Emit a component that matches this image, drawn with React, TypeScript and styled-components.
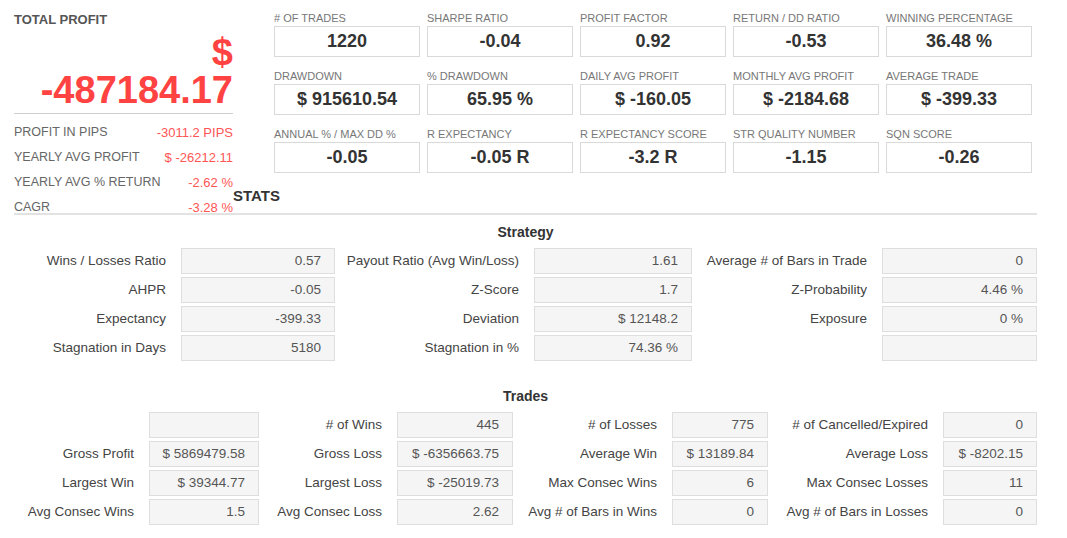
import React from "react";
import styled, { createGlobalStyle } from "styled-components";

const topStats: [string, string][] = [
  ["# OF TRADES", "1220"],
  ["SHARPE RATIO", "-0.04"],
  ["PROFIT FACTOR", "0.92"],
  ["RETURN / DD RATIO", "-0.53"],
  ["WINNING PERCENTAGE", "36.48 %"],
  ["DRAWDOWN", "$ 915610.54"],
  ["% DRAWDOWN", "65.95 %"],
  ["DAILY AVG PROFIT", "$ -160.05"],
  ["MONTHLY AVG PROFIT", "$ -2184.68"],
  ["AVERAGE TRADE", "$ -399.33"],
  ["ANNUAL % / MAX DD %", "-0.05"],
  ["R EXPECTANCY", "-0.05 R"],
  ["R EXPECTANCY SCORE", "-3.2 R"],
  ["STR QUALITY NUMBER", "-1.15"],
  ["SQN SCORE", "-0.26"],
];

const summary: [string, string][] = [
  ["PROFIT IN PIPS", "-3011.2 PIPS"],
  ["YEARLY AVG PROFIT", "$ -26212.11"],
  ["YEARLY AVG % RETURN", "-2.62 %"],
  ["CAGR", "-3.28 %"],
];

const strategy: [string, string][][] = [
  [["Wins / Losses Ratio", "0.57"], ["Payout Ratio (Avg Win/Loss)", "1.61"], ["Average # of Bars in Trade", "0"]],
  [["AHPR", "-0.05"], ["Z-Score", "1.7"], ["Z-Probability", "4.46 %"]],
  [["Expectancy", "-399.33"], ["Deviation", "$ 12148.2"], ["Exposure", "0 %"]],
  [["Stagnation in Days", "5180"], ["Stagnation in %", "74.36 %"], ["", ""]],
];

const trades: [string, string][][] = [
  [["", ""], ["# of Wins", "445"], ["# of Losses", "775"], ["# of Cancelled/Expired", "0"]],
  [["Gross Profit", "$ 5869479.58"], ["Gross Loss", "$ -6356663.75"], ["Average Win", "$ 13189.84"], ["Average Loss", "$ -8202.15"]],
  [["Largest Win", "$ 39344.77"], ["Largest Loss", "$ -25019.73"], ["Max Consec Wins", "6"], ["Max Consec Losses", "11"]],
  [["Avg Consec Wins", "1.5"], ["Avg Consec Loss", "2.62"], ["Avg # of Bars in Wins", "0"], ["Avg # of Bars in Losses", "0"]],
];

const App = () => {
  return (
    <>
      <GlobalStyle />
      <Page>
        <TopRow>
          <LeftPanel>
            <PanelTitle>TOTAL PROFIT</PanelTitle>
            <BigProfit>
              <div>$</div>
              <div>-487184.17</div>
            </BigProfit>
            <SummaryList>
              {summary.map(([label, value]) => (
                <SummaryRow key={label}>
                  <span>{label}</span>
                  <SummaryValue>{value}</SummaryValue>
                </SummaryRow>
              ))}
            </SummaryList>
          </LeftPanel>
          <RightCol>
            <KpiGrid>
              {topStats.map(([label, value]) => (
                <Kpi key={label}>
                  <KpiLabel>{label}</KpiLabel>
                  <KpiBox>{value}</KpiBox>
                </Kpi>
              ))}
            </KpiGrid>
            <StatsHeading>STATS</StatsHeading>
          </RightCol>
        </TopRow>

        <SectionTitle $top={9}>Strategy</SectionTitle>
        <StatTable $cols='167px 154px 199px 158px 190px 155px'>
          {strategy.flat().map(([label, value], i) => (
            <React.Fragment key={i}>
              <CellLabel>{label}</CellLabel>
              <CellBox>{value}</CellBox>
            </React.Fragment>
          ))}
        </StatTable>

        <SectionTitle $top={27}>Trades</SectionTitle>
        <StatTable $cols='135px 110px 138px 116px 159px 96px 175px 94px'>
          {trades.flat().map(([label, value], i) => (
            <React.Fragment key={i}>
              <CellLabel>{label}</CellLabel>
              <CellBox>{value}</CellBox>
            </React.Fragment>
          ))}
        </StatTable>
      </Page>
    </>
  );
};

export default App;

const GlobalStyle = createGlobalStyle`
  body {
    margin: 0;
    background: #fff;
    font-family: "Liberation Sans", Arial, sans-serif;
  }
`;

const Page = styled.div`
  width: 1023px;
  padding: 11px 0 0 14px;
`;

const TopRow = styled.div`
  display: flex;
  border-bottom: 2px solid #e2e2e2;
`;

const LeftPanel = styled.div`
  width: 219px;
  flex-shrink: 0;
  margin-bottom: -7px;
`;

const PanelTitle = styled.div`
  margin-top: 1px;
  font-size: 13px;
  line-height: 16px;
  font-weight: bold;
  color: #555;
`;

const BigProfit = styled.div`
  margin-top: 5px;
  padding-bottom: 4px;
  border-bottom: 1px solid #cfcfcf;
  text-align: right;
  font-size: 38px;
  line-height: 38px;
  font-weight: bold;
  color: #ff4343;
`;

const SummaryList = styled.div`
  padding-top: 6px;
`;

const SummaryRow = styled.div`
  display: flex;
  justify-content: space-between;
  height: 25px;
  line-height: 25px;
  font-size: 12.5px;
  color: #666;
  white-space: nowrap;
`;

const SummaryValue = styled.span`
  color: #ff5555;
  font-size: 13px;
`;

const RightCol = styled.div`
  flex: 1;
  display: flex;
  flex-direction: column;
`;

const KpiGrid = styled.div`
  margin-left: 41px;
  display: grid;
  grid-template-columns: repeat(5, 146px);
  column-gap: 7px;
  row-gap: 12px;
`;

const Kpi = styled.div`
  display: flex;
  flex-direction: column;
  gap: 1px;
`;

const KpiLabel = styled.div`
  font-size: 11px;
  line-height: 14px;
  color: #777;
  white-space: nowrap;
`;

const KpiBox = styled.div`
  box-sizing: border-box;
  height: 31px;
  line-height: 29px;
  border: 1px solid #d9d9d9;
  background: #fff;
  text-align: center;
  font-size: 18px;
  font-weight: bold;
  color: #333;
`;

const StatsHeading = styled.div`
  margin-top: auto;
  margin-bottom: 8px;
  font-size: 15px;
  line-height: 18px;
  font-weight: bold;
  color: #333;
`;

const SectionTitle = styled.div<{ $top: number }>`
  margin: ${(p) => p.$top}px 0 8px;
  text-align: center;
  font-size: 14px;
  line-height: 16px;
  font-weight: bold;
  color: #333;
`;

const StatTable = styled.div<{ $cols: string }>`
  display: grid;
  grid-template-columns: ${(p) => p.$cols};
  row-gap: 3px;
  font-size: 13.5px;
`;

const CellLabel = styled.div`
  height: 26px;
  line-height: 26px;
  padding-right: 15px;
  text-align: right;
  white-space: nowrap;
  color: #444;
`;

const CellBox = styled.div`
  box-sizing: border-box;
  height: 26px;
  line-height: 24px;
  padding-right: 13px;
  border: 1px solid #dedede;
  background: #f5f5f5;
  text-align: right;
  white-space: nowrap;
  color: #555;
`;
